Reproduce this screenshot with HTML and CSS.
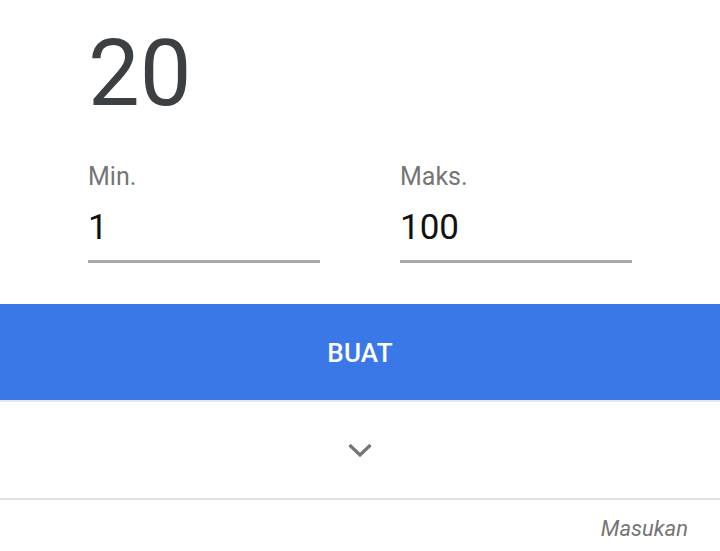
FILE: index.html
```html
<!DOCTYPE html>
<html lang="id">
<head>
  <meta charset="UTF-8" />
  <meta name="viewport" content="width=device-width, initial-scale=1.0"/>
  <title>Pembuat Angka Acak</title>
  <link rel="stylesheet" href="styles.css">
</head>
<body>
  <div class="generator">
    <div class="result">20</div>

    <div class="range">
      <div class="field">
        <label class="field-label">Min.</label>
        <div class="field-value">1</div>
      </div>
      <div class="field">
        <label class="field-label">Maks.</label>
        <div class="field-value">100</div>
      </div>
    </div>
  </div>

  <button class="make-btn">BUAT</button>

  <div class="expand">
    <svg width="26" height="16" viewBox="0 0 26 16">
      <path d="M2.5 3 L13 13 L23.5 3" fill="none" stroke="#757575" stroke-width="3.2" />
    </svg>
  </div>

  <footer class="footer">Masukan</footer>
</body>
</html>
```

FILE: styles.css
```css
* { box-sizing: border-box; margin: 0; padding: 0; }
body { font-family: Roboto, "Noto Sans", sans-serif; background: #fff; color: #202124; width: 720px; }
.generator { padding: 28px 88px 41px 88px; }
.result { font-size: 92px; line-height: 92px; color: #3c4043; }
.range { display: flex; gap: 80px; margin-top: 44px; }
.field { width: 232px; }
.field-label { display: block; font-size: 25px; line-height: 25px; color: #757575; }
.field-value { font-size: 35px; line-height: 35px; color: #111; margin-top: 21px; padding-bottom: 15px; border-bottom: 3px solid #a8a8a8; }
.make-btn { display: block; width: 100%; height: 98px; background: #3b78e7; color: #fff; border: none; border-bottom: 2px solid #e3e8f1; font-family: Roboto, sans-serif; font-size: 26px; font-weight: 500; letter-spacing: 0.2px; padding-top: 2px; }
.expand { height: 98px; display: flex; align-items: center; justify-content: center; border-bottom: 2px solid #e2e2e2; }
.footer { text-align: right; padding: 16px 32px 0 0; font-size: 22px; font-style: italic; color: #757575; }
```
